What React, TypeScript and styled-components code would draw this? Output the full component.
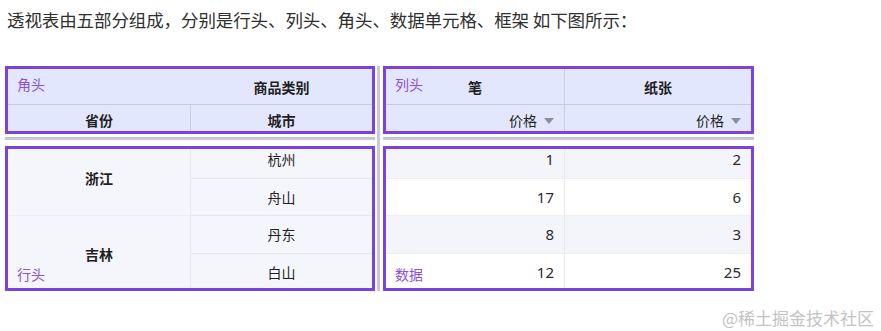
import styled, { createGlobalStyle } from 'styled-components'

const GlobalStyle = createGlobalStyle`
  html, body {
    margin: 0;
    padding: 0;
    background: #ffffff;
  }
  body {
    font-family: "Noto Sans CJK SC", "Noto Sans", sans-serif;
    color: #333333;
  }
`

const PURPLE = '#7a42df'
const LABEL = '#8a50e2'

const Page = styled.div`
  width: 881px;
  height: 331px;
  overflow: hidden;
`

const Intro = styled.p`
  margin: 0;
  padding: 8px 0 0 7px;
  font-size: 17.5px;
  line-height: 24px;
  color: #2f2f2f;
  letter-spacing: -0.1px;
`

const Pivot = styled.div`
  display: grid;
  grid-template-columns: 370px 8px 371px;
  grid-template-rows: 68px 12px 145px;
  grid-template-areas:
    "corner split cols"
    "hl split hr"
    "rows split data";
  margin: 34px 0 0 5px;
  width: 749px;
`

const Quadrant = styled.div<{ $bg: string; $area: string }>`
  grid-area: ${p => p.$area};
  position: relative;
  box-sizing: border-box;
  border: 3px solid ${PURPLE};
  background: ${p => p.$bg};
  overflow: hidden;
  font-size: 14px;
`

const VSplit = styled.div`
  grid-area: split;
  background: linear-gradient(to right, transparent 2px, #c6cada 2px, #c6cada 5px, transparent 5px);
`

const HSplit = styled.div<{ $area: string }>`
  grid-area: ${p => p.$area};
  background: linear-gradient(to bottom, transparent 3px, #bcc1d3 3px, #c9cddb 6px, transparent 6px);
`

const Label = styled.span<{ $bottom?: boolean }>`
  position: absolute;
  left: 9px;
  ${p => (p.$bottom ? 'bottom: 4px;' : 'top: 5px;')}
  color: ${LABEL};
  font-size: 14px;
  line-height: 20px;
`

const HeadGrid = styled.div<{ $first: number }>`
  display: grid;
  grid-template-columns: ${p => p.$first}px 1fr;
  grid-template-rows: 36px 1fr;
  height: 100%;
`

const HeadCell = styled.div<{ $align?: 'center' | 'right'; $divider?: boolean; $top?: boolean }>`
  display: flex;
  align-items: center;
  justify-content: ${p => (p.$align === 'right' ? 'flex-end' : 'center')};
  padding: ${p => (p.$top ? '0' : '4px 0 0 0')};
  padding-right: ${p => (p.$align === 'right' ? '10px' : '0')};
  font-weight: ${p => (p.$align === 'right' ? 400 : 700)};
  color: #1f1f1f;
  border-bottom: ${p => (p.$top ? '1px solid #c5cbe2' : 'none')};
  border-right: ${p => (p.$divider ? '1px solid #c9cee2' : 'none')};
  box-sizing: border-box;
`

const Caret = styled.span`
  display: inline-block;
  width: 0;
  height: 0;
  margin-left: 7px;
  border-left: 5.5px solid transparent;
  border-right: 5.5px solid transparent;
  border-top: 6px solid #8b8f9b;
  transform: translateY(1px);
`

const BodyGrid = styled.div<{ $first: number }>`
  display: grid;
  grid-template-columns: ${p => p.$first}px 1fr;
  grid-template-rows: repeat(4, 37.5px);
  margin-top: -8px;
`

const ProvinceCell = styled.div<{ $row: number; $line?: boolean }>`
  grid-column: 1;
  grid-row: ${p => p.$row} / span 2;
  display: flex;
  align-items: center;
  justify-content: center;
  border-bottom: ${p => (p.$line ? '1px solid #eceef5' : 'none')};
  border-right: 1px solid #e6e8f1;
  font-weight: 700;
  color: #1f1f1f;
  box-sizing: border-box;
`

const CityCell = styled.div<{ $row: number; $line?: boolean }>`
  grid-column: 2;
  grid-row: ${p => p.$row};
  display: flex;
  align-items: center;
  justify-content: center;
  border-bottom: ${p => (p.$line ? '1px solid #e7e9f2' : 'none')};
  color: #1f1f1f;
  box-sizing: border-box;
`

const DataCell = styled.div<{ $shade: boolean; $divider?: boolean; $line?: boolean }>`
  display: flex;
  align-items: center;
  justify-content: flex-end;
  padding-right: 10px;
  background: ${p => (p.$shade ? '#f4f5fa' : '#ffffff')};
  border-right: ${p => (p.$divider ? '1px solid #e6e8f0' : 'none')};
  border-bottom: ${p => (p.$line ? '1px solid #eceef4' : 'none')};
  color: #2b2b2b;
  font-family: "Noto Sans", "Noto Sans CJK SC", sans-serif;
  font-size: 15px;
  box-sizing: border-box;
`

const Watermark = styled.div`
  margin-top: 15px;
  padding-right: 7px;
  text-align: right;
  font-size: 17px;
  line-height: 24px;
  color: #c3c3c3;
`

const provinces = [
  { name: '浙江', row: 1, line: true },
  { name: '吉林', row: 3, line: false },
]

const cities = ['杭州', '舟山', '丹东', '白山']

const data = [
  [1, 2],
  [17, 6],
  [8, 3],
  [12, 25],
]

export default function App() {
  return (
    <Page>
      <GlobalStyle />
      <Intro>透视表由五部分组成，分别是行头、列头、角头、数据单元格、框架 如下图所示：</Intro>
      <Pivot>
        <Quadrant $bg="#e3e7fd" $area="corner">
          <Label>角头</Label>
          <HeadGrid $first={183}>
            <HeadCell $top />
            <HeadCell $top>商品类别</HeadCell>
            <HeadCell $divider>省份</HeadCell>
            <HeadCell>城市</HeadCell>
          </HeadGrid>
        </Quadrant>
        <VSplit />
        <Quadrant $bg="#e3e7fd" $area="cols">
          <Label>列头</Label>
          <HeadGrid $first={179}>
            <HeadCell $top $divider>笔</HeadCell>
            <HeadCell $top>纸张</HeadCell>
            <HeadCell $align="right" $divider>价格<Caret /></HeadCell>
            <HeadCell $align="right">价格<Caret /></HeadCell>
          </HeadGrid>
        </Quadrant>
        <HSplit $area="hl" />
        <HSplit $area="hr" />
        <Quadrant $bg="#f5f6fb" $area="rows">
          <BodyGrid $first={183}>
            {provinces.map(p => (
              <ProvinceCell key={p.name} $row={p.row} $line={p.line}>{p.name}</ProvinceCell>
            ))}
            {cities.map((c, i) => (
              <CityCell key={c} $row={i + 1} $line={i < 3}>{c}</CityCell>
            ))}
          </BodyGrid>
          <Label $bottom>行头</Label>
        </Quadrant>
        <Quadrant $bg="#ffffff" $area="data">
          <BodyGrid $first={179}>
            {data.map((row, i) =>
              row.map((v, j) => (
                <DataCell key={`${i}-${j}`} $shade={i % 2 === 0} $divider={j === 0} $line={i < 3}>
                  {v}
                </DataCell>
              ))
            )}
          </BodyGrid>
          <Label $bottom>数据</Label>
        </Quadrant>
      </Pivot>
      <Watermark>@稀土掘金技术社区</Watermark>
    </Page>
  )
}
